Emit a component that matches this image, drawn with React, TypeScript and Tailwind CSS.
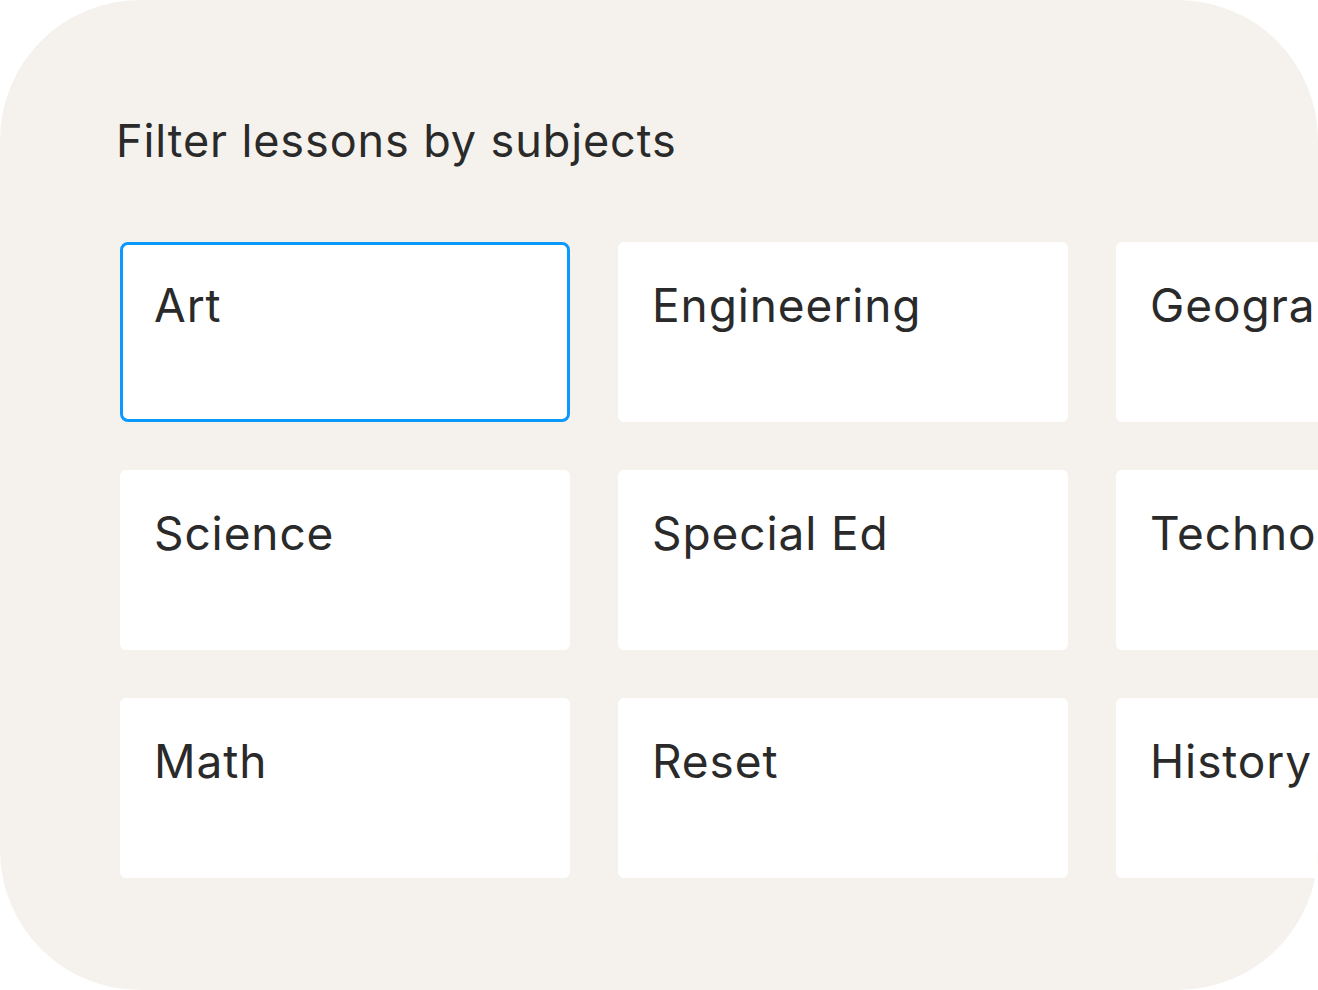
import React, { useState } from 'react';

const subjects = [
  'Art',
  'Engineering',
  'Geography',
  'Science',
  'Special Ed',
  'Technology',
  'Math',
  'Reset',
  'History',
];

export default function App() {
  const [selected, setSelected] = useState('Art');

  return (
    <div className="w-[1318px] h-[990px] bg-white" style={{ fontFamily: 'Inter, "Noto Sans", sans-serif' }}>
      <div className="w-[1318px] h-[990px] rounded-[140px] bg-[#f5f2ed] overflow-hidden pl-[120px] pt-[114px]">
        <h1 className="text-[45px] leading-[54px] text-[#2a2a2a] font-normal -ml-[4px] tracking-[0.9px]">
          Filter lessons by subjects
        </h1>
        <div className="mt-[74px] grid grid-cols-[450px_450px_450px] auto-rows-[180px] gap-[48px] w-max">
          {subjects.map((s) => {
            const active = s === selected;
            return (
              <button
                key={s}
                onClick={() => setSelected(s)}
                className={
                  active
                    ? 'bg-white rounded-[8px] border-[3px] border-[#0a99ff] text-left flex items-start pl-[31px] pt-[32px] whitespace-nowrap'
                    : 'bg-white rounded-[6px] border-[3px] border-white text-left flex items-start pl-[31px] pt-[32px] whitespace-nowrap'
                }
              >
                <span className="text-[46px] leading-[56px] text-[#2a2a2a] tracking-[0.9px]">{s}</span>
              </button>
            );
          })}
        </div>
      </div>
    </div>
  );
}
